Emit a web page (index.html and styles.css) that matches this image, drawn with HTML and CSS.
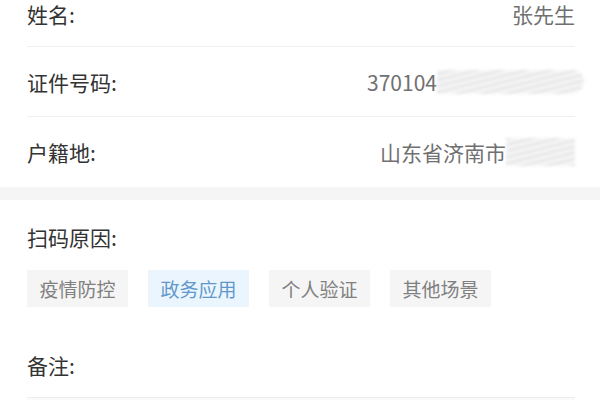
FILE: index.html
```html
<!DOCTYPE html>
<html lang="zh-CN">
<head>
  <meta charset="UTF-8">
  <meta name="viewport" content="width=device-width, initial-scale=1.0">
  <title>扫码信息</title>
  <link rel="stylesheet" href="styles.css">
</head>
<body>
  <!-- 个人信息 -->
  <div class="info-list">
    <div class="info-row">
      <span class="info-label">姓名:</span>
      <span class="info-value">张先生</span>
    </div>
    <div class="info-row">
      <span class="info-label">证件号码:</span>
      <span class="info-value">370104<span class="smudge smudge-id"></span></span>
    </div>
    <div class="info-row">
      <span class="info-label">户籍地:</span>
      <span class="info-value">山东省济南市<span class="smudge smudge-addr"></span></span>
    </div>
  </div>

  <div class="gap-band"></div>

  <!-- 扫码原因 -->
  <div class="reason">
    <div class="section-title">扫码原因:</div>
    <div class="tags">
      <span class="tag">疫情防控</span>
      <span class="tag active">政务应用</span>
      <span class="tag">个人验证</span>
      <span class="tag">其他场景</span>
    </div>
    <div class="section-title remark-title">备注:</div>
    <div class="remark-box"></div>
  </div>
</body>
</html>
```

FILE: styles.css
```css
* {
  box-sizing: border-box;
}
body {
  margin: 0;
  background: #fff;
  font-family: "Noto Sans CJK SC", "Liberation Sans", sans-serif;
  color: #333;
  overflow: hidden;
}
.info-list {
  padding: 0 25px 0 27px;
}
.info-row {
  display: flex;
  align-items: center;
  justify-content: space-between;
  height: 70px;
  border-bottom: 1px solid #efefef;
}
/* first row is partly scrolled away */
.info-row:first-child {
  height: 47px;
  align-items: flex-start;
  padding-top: 3px;
}
.info-row:last-child {
  border-bottom: none;
}
.info-label {
  font-size: 21px;
  line-height: 22px;
  color: #333;
}
.info-value {
  display: flex;
  align-items: center;
  font-size: 21px;
  line-height: 22px;
  color: #707070;
}
.smudge {
  display: inline-block;
  height: 24px;
  background: repeating-linear-gradient(-14deg, #dcdcdc 0 2px, #f3f3f3 2px 6px);
  filter: blur(1.8px);
  opacity: 0.8;
}
.smudge-id {
  width: 147px;
  margin-right: -9px;
  border-radius: 0 12px 16px 0;
}
.smudge-addr {
  width: 69px;
  height: 28px;
}
.gap-band {
  height: 13px;
  background: #f5f5f5;
}
.reason {
  padding: 26px 25px 0 27px;
}
.section-title {
  font-size: 21px;
  line-height: 22px;
  color: #333;
}
.tags {
  display: flex;
  gap: 20px;
  margin-top: 22px;
}
.tag {
  display: flex;
  align-items: center;
  justify-content: center;
  width: 101px;
  height: 37px;
  background: #f5f5f5;
  font-size: 19px;
  color: #808080;
}
.tag.active {
  background: #ebf5fd;
  color: #5e98cc;
}
.remark-title {
  margin-top: 47px;
}
.remark-box {
  margin-top: 21px;
  height: 3px;
  border-top: 1px solid #ececec;
  background: #fafafa;
}
```
